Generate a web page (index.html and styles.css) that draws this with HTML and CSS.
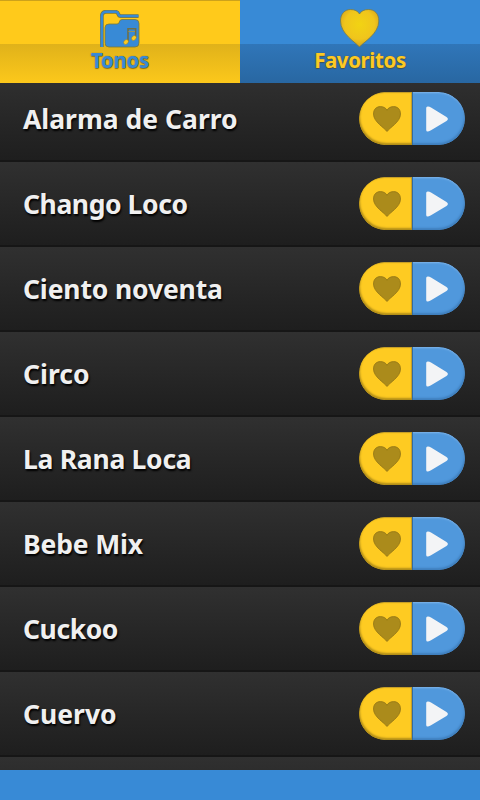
FILE: index.html
```
<!DOCTYPE html>
<html lang="es">
<head>
<meta charset="utf-8">
<title>Tonos</title>
<link rel="stylesheet" href="styles.css">
</head>
<body>
<svg class="defs" width="0" height="0" aria-hidden="true">
  <symbol id="heart" viewBox="0 0 28 26"><path d="M14 25.500C11.500 21.800 0.500 16 0.500 8C0.500 3 3.700 0.600 7.400 0.600C10.500 0.600 12.800 1.900 14 4.200C15.200 1.900 17.500 0.600 20.600 0.600C24.300 0.600 27.500 3 27.500 8C27.500 16 16.500 21.800 14 25.500Z"/></symbol>
  <symbol id="play" viewBox="0 0 22 26"><path d="M0.200 2Q0.200 0.200 2 0.400Q3.500 0.500 5 1.500L20.500 11Q23.300 13 20.500 15L5 24.300Q3.500 25.300 2 25.500Q0.200 25.700 0.200 24Z"/></symbol>
</svg>
<main class="app">
  <nav class="tabs">
    <a class="tab tab-tones">
      <svg class="folder" viewBox="0 0 40 39">
        <path d="M1.800 37V6.500Q1.800 1.800 6 1.800H15.500Q17.700 1.800 18.300 4Q18.900 6.100 21 6.100H38.500" fill="none" stroke="#7c7838" stroke-width="3.800"/>
        <path d="M5 17.500Q5 14 9 14H17Q19 14 19.300 12Q19.700 9.500 22 9.500H35Q39 9.500 39 13.500V33Q39 37 35 37H9Q5 37 5 33Z" fill="#388ad6" stroke="#7c7838" stroke-width=".8"/>
        <path d="M1.800 37V6.500Q1.800 1.800 6 1.800H15.500Q17.700 1.800 18.300 4Q18.900 6.100 21 6.100H38.500" fill="none" stroke="#388ad6" stroke-width="2.500"/>
        <path d="M28 32V18.700H35.600V28" fill="none" stroke="#6d6f48" stroke-width="1.600"/>
        <path d="M28.500 21.500H35" fill="none" stroke="#99935a" stroke-width="1"/>
        <ellipse cx="26" cy="32" rx="2.700" ry="2.100" fill="#fcca20" stroke="#8c7d35" stroke-width=".5" transform="rotate(-45 26 32)"/>
        <ellipse cx="33.900" cy="28" rx="2.700" ry="2.100" fill="#fcca20" stroke="#8c7d35" stroke-width=".5" transform="rotate(-45 33.900 28)"/>
      </svg>
      <span class="tab-label tones-label">Tonos</span>
    </a>
    <a class="tab tab-favorites">
      <svg class="big-heart" viewBox="0 0 40 39">
        <defs><radialGradient id="gold" cx=".5" cy=".4" r=".6"><stop offset="0" stop-color="#f2d313"/><stop offset=".65" stop-color="#f0c51c"/><stop offset="1" stop-color="#d5a31c"/></radialGradient></defs>
        <path d="M19.500 38C16 33.500 0.500 25 0.500 12C0.500 4.500 5 0.500 10.500 0.500C14.500 0.500 18 2 19.500 5C21 2 24.500 0.500 28.500 0.500C34.500 0.500 38.800 4.500 38.800 12C38.800 25 23 33.500 19.500 38Z" fill="url(#gold)" stroke="#777b4b" stroke-width=".8"/>
      </svg>
      <span class="tab-label favorites-label">Favoritos</span>
    </a>
  </nav>
  <ul class="list">
    <li class="row"><span class="name">Alarma de Carro</span><div class="pill"><span class="fav"><svg><use href="#heart"/></svg></span><span class="play"><svg><use href="#play"/></svg></span></div></li>
    <li class="row"><span class="name tightest">Chango Loco</span><div class="pill"><span class="fav"><svg><use href="#heart"/></svg></span><span class="play"><svg><use href="#play"/></svg></span></div></li>
    <li class="row"><span class="name tight">Ciento noventa</span><div class="pill"><span class="fav"><svg><use href="#heart"/></svg></span><span class="play"><svg><use href="#play"/></svg></span></div></li>
    <li class="row"><span class="name">Circo</span><div class="pill"><span class="fav"><svg><use href="#heart"/></svg></span><span class="play"><svg><use href="#play"/></svg></span></div></li>
    <li class="row"><span class="name tighter">La Rana Loca</span><div class="pill"><span class="fav"><svg><use href="#heart"/></svg></span><span class="play"><svg><use href="#play"/></svg></span></div></li>
    <li class="row"><span class="name tight">Bebe Mix</span><div class="pill"><span class="fav"><svg><use href="#heart"/></svg></span><span class="play"><svg><use href="#play"/></svg></span></div></li>
    <li class="row"><span class="name tightest">Cuckoo</span><div class="pill"><span class="fav"><svg><use href="#heart"/></svg></span><span class="play"><svg><use href="#play"/></svg></span></div></li>
    <li class="row"><span class="name">Cuervo</span><div class="pill"><span class="fav"><svg><use href="#heart"/></svg></span><span class="play"><svg><use href="#play"/></svg></span></div></li>
    <li class="row"></li>
  </ul>
  <footer class="banner"></footer>
</main>
</body>
</html>
```
FILE: styles.css
```
* { box-sizing: border-box; }
body { margin: 0; background: #388ad6; font-family: "Noto Sans", "Open Sans", sans-serif; font-weight: 700; }
.defs { position: absolute; }
.app { display: flex; flex-direction: column; width: 480px; height: 800px; overflow: hidden; }
.tabs { display: grid; grid-template-columns: 1fr 1fr; height: 83px; flex: none; }
.tab { display: flex; flex-direction: column; align-items: center; }
.tab-tones { padding-top: 10px; color: #388ad6; background: linear-gradient(#cda21b 0 1px, #ffca1b 1px 44px, #e0b21a 44px, #fcc81b 100%); }
.tab-favorites { padding-top: 9px; color: #fcca24; background: linear-gradient(#388ad6 0 44px, #3076b9 44px, #2867a2 100%); }
.folder { width: 40px; height: 39px; margin-bottom: -1px; }
.big-heart { width: 40px; height: 39px; }
.tab-label { font-size: 20.5px; line-height: 24px; white-space: nowrap; text-shadow: 0 0 1px #59502c, 0 1px 1px rgba(70, 65, 30, .6); }
.tones-label { letter-spacing: -.3px; }
.favorites-label { letter-spacing: -.4px; }
.list { list-style: none; margin: 0; padding: 0; flex: none; height: 687px; overflow: hidden; background: #2d2d2d; }
.row { display: flex; align-items: flex-start; justify-content: space-between; height: 85px; padding: 15px 15px 0 23px; background: linear-gradient(#303030, #1e1e1e 83px, #161616 83px); }
.row:first-child { margin-top: -6px; }
.name { color: #f0f0f0; font-size: 26.5px; line-height: 54px; white-space: nowrap; text-shadow: 1px 2px 2px #000; }
.tight { letter-spacing: -.14px; }
.tighter { letter-spacing: -.28px; }
.tightest { letter-spacing: -.42px; }
.pill { display: flex; width: 106px; height: 53px; border-radius: 27px; overflow: hidden; }
.fav, .play { width: 53px; height: 53px; }
.fav { padding: 14px 0 0 14px; background: #fecb22; border-radius: 27px 0 0 27px; box-shadow: inset 1px -2px 2px #b18d18, inset -1px 1px 1px #c29c28; }
.fav svg { display: block; width: 28px; height: 26px; fill: #ab8b1b; stroke: #927517; stroke-width: .8; }
.play { padding: 14px 0 0 14px; background: #5098dc; border-radius: 0 27px 27px 0; box-shadow: inset 1px 0 0 #326ca2, inset -1px -2px 2px #3f7fbd, inset 0 1px 2px #80b5e8; }
.play svg { display: block; width: 22px; height: 26px; fill: #f3f4f6; }
.banner { height: 30px; flex: none; background: #388ad6; }
```
